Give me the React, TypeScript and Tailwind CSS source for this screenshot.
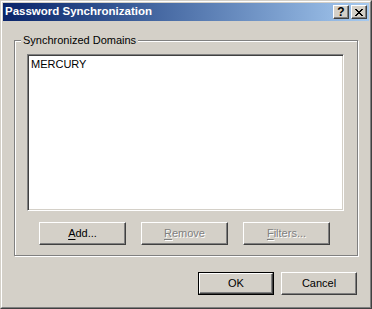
import React from "react";

const raised =
  "border border-t-white border-l-white border-r-[#404040] border-b-[#404040] shadow-[inset_-1px_-1px_0_#808080]";

function Btn({ label, acc, disabled, w }: { label: string; acc: number; disabled?: boolean; w: string }) {
  return (
    <div className={`${w} h-[23px] ${raised} flex items-center justify-center`}>
      <span className={disabled ? "text-[#808080] [text-shadow:1px_1px_0_#fff]" : "text-black"}>
        {label.slice(0, acc)}
        <span className="underline underline-offset-[2px]">{label[acc]}</span>
        {label.slice(acc + 1)}
      </span>
    </div>
  );
}

function PlainBtn({ label, def, w }: { label: string; def?: boolean; w: string }) {
  if (def) {
    return (
      <div className={`${w} h-[23px] border border-black`}>
        <div className={`h-full ${raised} flex items-center justify-center`}>{label}</div>
      </div>
    );
  }
  return <div className={`${w} h-[23px] ${raised} flex items-center justify-center`}>{label}</div>;
}

export default function App() {
  return (
    <div className="w-[372px] h-[309px] bg-[#d4d0c8] border border-t-[#d4d0c8] border-l-[#d4d0c8] border-r-[#404040] border-b-[#404040] font-['Liberation_Sans',Arial,sans-serif] text-[11px] text-black select-none">
      <div className="h-full border border-t-white border-l-white border-r-[#808080] border-b-[#808080] p-px flex flex-col">
        {/* title bar */}
        <div className="h-[18px] flex items-center bg-gradient-to-r from-[#0a246a] to-[#a6caf0] pl-[2px] pr-[2px]">
          <span className="flex-1 text-white font-['Liberation_Sans',Arial,sans-serif] font-bold text-[11.5px]">Password Synchronization</span>
          <div className={`w-[16px] h-[14px] bg-[#d4d0c8] ${raised} flex items-center justify-center font-bold text-[12px] leading-none`}>?</div>
          <div className={`w-[16px] h-[14px] ml-[2px] bg-[#d4d0c8] ${raised} flex items-center justify-center`}>
            <svg width="8" height="7" viewBox="0 0 8 7">
              <path d="M0 0h2v1h-2zM6 0h2v1h-2zM1 1h2v1h-2zM5 1h2v1h-2zM2 2h4v1h-4zM3 3h2v1h-2zM2 4h4v1h-4zM1 5h2v1h-2zM5 5h2v1h-2zM0 6h2v1h-2zM6 6h2v1h-2z" fill="#000" />
            </svg>
          </div>
        </div>
        {/* body */}
        <div className="flex-1 flex flex-col px-[11px]">
          <div className="relative mt-[19px] h-[216px] border border-[#808080] shadow-[inset_1px_1px_0_#fff,1px_1px_0_#fff] pt-[13px] pl-[12px]">
            <span className="absolute -top-[8px] left-[6px] bg-[#d4d0c8] px-[2px] leading-[14px]">Synchronized Domains</span>
            <div className="w-[317px] h-[157px] bg-white border border-t-[#808080] border-l-[#808080] border-r-white border-b-white shadow-[inset_1px_1px_0_#404040,inset_-1px_-1px_0_#d4d0c8] pl-[3px] pt-[2px] leading-[14px]">
              MERCURY
            </div>
            <div className="flex gap-[15px] mt-[11px] pl-[12px]">
              <Btn label="Add..." acc={0} w="w-[87px]" />
              <Btn label="Remove" acc={0} disabled w="w-[87px]" />
              <Btn label="Filters..." acc={0} disabled w="w-[87px]" />
            </div>
          </div>
          <div className="flex justify-end gap-[7px] mt-[16px] pr-px">
            <PlainBtn label="OK" def w="w-[76px]" />
            <PlainBtn label="Cancel" w="w-[76px]" />
          </div>
        </div>
      </div>
    </div>
  );
}
